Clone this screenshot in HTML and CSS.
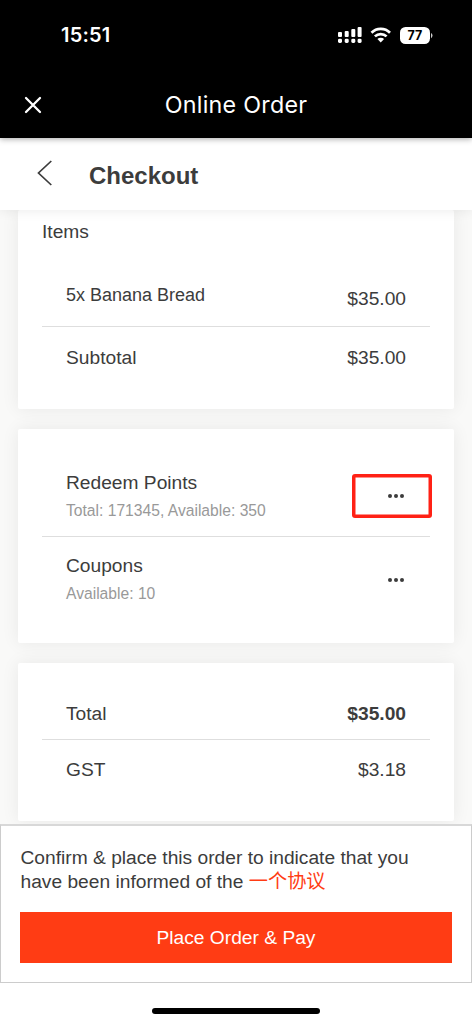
FILE: index.html
```html
<!DOCTYPE html>
<html lang="en">
<head>
<meta charset="utf-8">
<title>Checkout</title>
<link rel="stylesheet" href="styles.css">
</head>
<body>
<div class="phone">
  <header class="top">
    <div class="status">
      <span class="time">15:51</span>
      <svg class="status-icons" width="96" height="20" viewBox="0 0 96 20" fill="#fff">
        <rect x="1" y="7" width="4" height="5" rx="1"/><rect x="7.7" y="6" width="4" height="6" rx="1"/><rect x="14.3" y="4" width="4" height="8" rx="1"/><rect x="20.6" y="2" width="4" height="10" rx="1"/>
        <rect x="1" y="13.7" width="4" height="4.3" rx="1.4"/><rect x="7.7" y="13.7" width="4" height="4.3" rx="1.4"/><rect x="14.3" y="13.7" width="4" height="4.3" rx="1.4"/><rect x="20.6" y="13.7" width="4" height="4.3" rx="1.4"/>
        <path d="M34.5 7.8A13 13 0 0 1 53 7.8M37.9 11.4A8.4 8.4 0 0 1 49.6 11.4" fill="none" stroke="#fff" stroke-width="2.7"/>
        <path d="M40.4 14.1A4.8 4.8 0 0 1 47.1 14.1L43.75 17.6Z"/>
        <rect x="63" y="2" width="30" height="17" rx="5.5"/>
        <path d="M94 8v5.2q1.5-.8 1.5-2.6T94 8Z" opacity=".8"/>
        <text class="battery-text" x="77.8" y="15" text-anchor="middle">77</text>
      </svg>
    </div>
    <div class="app-bar">
      <svg class="close" width="18" height="18" viewBox="0 0 18 18"><path d="M2 2L16 16M16 2L2 16" stroke="#fff" stroke-width="2.3" stroke-linecap="round"/></svg>
      <span class="app-title">Online Order</span>
    </div>
  </header>
  <nav class="page-bar">
    <svg class="back" width="16" height="26" viewBox="0 0 16 26"><path d="M14.3 1L1.5 13L14.3 25" fill="none" stroke="#3c3c3c" stroke-width="1.7"/></svg>
    <h1 class="page-title">Checkout</h1>
  </nav>
  <main class="content">
    <section class="card card-items">
      <h2 class="section-title">Items</h2>
      <div class="row row-item"><span class="item-name">5x Banana Bread</span><span class="item-price">$35.00</span></div>
      <div class="row row-subtotal"><span>Subtotal</span><span>$35.00</span></div>
    </section>
    <section class="card card-rewards">
      <div class="row reward first">
        <div><div>Redeem Points</div><div class="hint">Total: 171345, Available: 350</div></div>
        <span class="more highlighted"><i></i><i></i><i></i></span>
      </div>
      <div class="row reward">
        <div><div>Coupons</div><div class="hint">Available: 10</div></div>
        <span class="more"><i></i><i></i><i></i></span>
      </div>
    </section>
    <section class="card card-total">
      <div class="row row-total"><span>Total</span><b>$35.00</b></div>
      <div class="row row-gst"><span>GST</span><span>$3.18</span></div>
    </section>
  </main>
  <footer class="confirm">
    <p class="terms">Confirm &amp; place this order to indicate that you<br>have been informed of the <a class="link">一个协议</a></p>
    <button class="pay">Place Order &amp; Pay</button>
  </footer>
  <div class="home"><div class="home-bar"></div></div>
</div>
</body>
</html>
```
FILE: styles.css
```css
* { box-sizing: border-box; }
body {
  margin: 0;
  background: #fff;
  color: #3c3c3c;
  font: 19.2px/24px "Liberation Sans", "Noto Sans CJK SC", sans-serif;
}
.phone {
  display: flex;
  flex-direction: column;
  width: 472px;
  height: 1024px;
  overflow: hidden;
}
.top {
  position: relative;
  z-index: 3;
  height: 138px;
  flex: none;
  background: #000;
  color: #fff;
  box-shadow: 0 1px 6px rgba(0, 0, 0, .35);
}
.status {
  display: flex;
  align-items: center;
  justify-content: space-between;
  height: 70px;
  padding: 0 39px 0 61px;
}
.time { font: 600 20px/24px Inter, sans-serif; letter-spacing: .2px; }
.battery-text { font: 700 12.5px Inter, sans-serif; fill: #000; }
.app-bar {
  display: grid;
  grid-template-columns: 67px 1fr 67px;
  align-items: center;
  height: 70px;
}
.close { margin-left: 24px; }
.app-title {
  text-align: center;
  font: 400 23.3px/28px Inter, sans-serif;
  letter-spacing: .25px;
}
.page-bar {
  position: relative;
  z-index: 2;
  display: flex;
  align-items: center;
  flex: none;
  gap: 36px;
  height: 72px;
  padding: 0 0 0 37px;
  background: #fff;
  box-shadow: 0 0 12px rgba(0, 0, 0, .09);
}
.back { margin-bottom: 2px; }
.page-title { margin: 3px 0 0; font-size: 24px; line-height: 28px; }
.content {
  display: flex;
  flex-direction: column;
  flex: none;
  height: 614px;
  padding: 0 18px;
  gap: 19.5px;
  background: #f9f9f8;
}
.card {
  flex: none;
  padding: 0 24px;
  background: #fff;
  border-radius: 2px;
  box-shadow: 0 0 18px rgba(0, 0, 0, .07);
}
.card-items { height: 199px; padding-top: 10px; }
.card-rewards { height: 214.5px; padding-top: 41px; }
.card-total { height: 158.5px; padding-top: 26px; }
.section-title { margin: 0; font-size: 19.2px; font-weight: 400; }
.row {
  display: flex;
  align-items: center;
  justify-content: space-between;
  padding: 0 24px;
}
.row + .row { border-top: 1px solid #dedede; }
.row-item { height: 82px; padding-top: 19px; }
.item-name { font-size: 18px; }
.item-price { margin-top: 9px; }
.row-subtotal { height: 62px; }
.reward { height: 84px; padding-top: 4px; }
.reward.first { height: 66px; padding-bottom: 12px; padding-top: 0; }
.hint { margin-top: 4px; font-size: 15.65px; color: #999; }
.more {
  display: flex;
  align-items: center;
  justify-content: center;
  gap: 2px;
  width: 80px;
  height: 44px;
  margin-right: -26px;
  padding-left: 8px;
}
.more i { width: 4px; height: 4px; border-radius: 50%; background: #3c3c3c; }
.highlighted { margin-top: -1px; box-shadow: inset 0 0 0 3.5px #ff2115; border-radius: 3px; }
.row-total { height: 50px; }
.row-gst { height: 62px; }
.confirm {
  position: relative;
  z-index: 2;
  flex: none;
  height: 159px;
  padding: 20px 19px 0;
  background: #fff;
  border: 1px solid #ccc;
  border-top: 2px solid #d8d8d8;
}
.terms { margin: 0; padding-left: .5px; white-space: nowrap; }
.link { color: #ff3c14; }
.pay {
  display: block;
  width: 432px;
  height: 51px;
  margin-top: 18px;
  padding: 0;
  border: 0;
  background: #ff3c14;
  color: #fff;
  font: inherit;
}
.home { display: flex; justify-content: center; padding-top: 25px; }
.home-bar { width: 168px; height: 6px; border-radius: 3px; background: #000; }
```
